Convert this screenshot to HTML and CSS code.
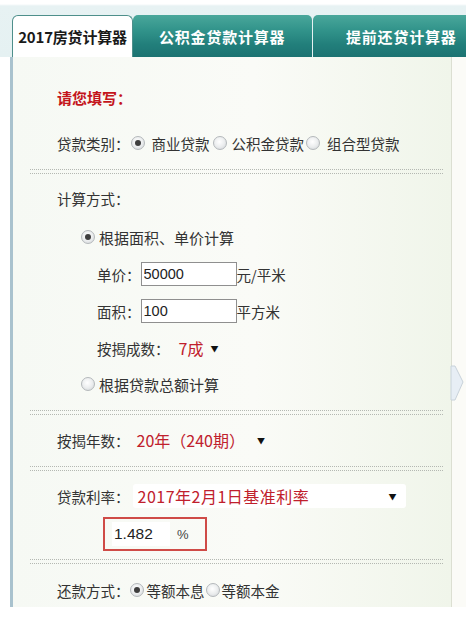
FILE: index.html
```html
<!DOCTYPE html>
<html lang="zh-CN">
<head>
<meta charset="utf-8">
<title>房贷计算器</title>
<link rel="stylesheet" href="styles.css">
</head>
<body>
<div class="page">
  <div class="tabs">
    <div class="tab tab-active">2017房贷计算器</div>
    <div class="tab tab-2">公积金贷款计算器</div>
    <div class="tab tab-3">提前还贷计算器</div>
  </div>
  <div class="wrap">
    <div class="panel">
      <div class="row title">请您填写：</div>
      <div class="row r-type">
        <span class="lbl">贷款类别：</span>
        <span class="radio on r1"></span><span class="opt">商业贷款</span>
        <span class="radio r2"></span><span class="opt">公积金贷款</span>
        <span class="radio r3"></span><span class="opt">组合型贷款</span>
      </div>
      <div class="sep s1"></div>
      <div class="row r-method"><span class="lbl">计算方式：</span></div>
      <div class="row sub-radio r-area"><span class="radio on"></span><span class="opt o-sub">根据面积、单价计算</span></div>
      <div class="row sub r-price"><span class="lbl">单价：</span><input class="txt" value="50000"><span class="unit">元/平米</span></div>
      <div class="row sub r-size"><span class="lbl">面积：</span><input class="txt" value="100"><span class="unit">平方米</span></div>
      <div class="row sub r-ratio"><span class="lbl">按揭成数：</span><span class="sel sel-ratio">7成</span><span class="arrow a-ratio">▼</span></div>
      <div class="row sub-radio r-total"><span class="radio"></span><span class="opt o-sub">根据贷款总额计算</span></div>
      <div class="sep s2"></div>
      <div class="row r-years"><span class="lbl">按揭年数：</span><span class="sel sel-years">20年（240期）</span><span class="arrow a-years">▼</span></div>
      <div class="sep s3"></div>
      <div class="row r-rate"><span class="lbl">贷款利率：</span><span class="sel-box"><span class="sel sel-rate">2017年2月1日基准利率</span><span class="arrow a-rate">▼</span></span></div>
      <div class="ratebox"><span class="rate-in">1.482</span><span class="pct">%</span></div>
      <div class="sep s4"></div>
      <div class="row r-repay">
        <span class="lbl">还款方式：</span>
        <span class="radio on rp1"></span><span class="opt">等额本息</span>
        <span class="radio rp2"></span><span class="opt">等额本金</span>
      </div>
    </div>
    <div class="side">
      <svg class="chev" width="16" height="36" viewBox="0 0 16 36">
        <polygon points="2,1 6,1 14,17 6,35 2,35" fill="#e7eef5" stroke="#c8d2da" stroke-width="1"/>
      </svg>
    </div>
  </div>
</div>
</body>
</html>
```

FILE: styles.css
```css
* { box-sizing: border-box; }
html, body { margin: 0; padding: 0; background: #ffffff; }
body {
  font-family: "Noto Sans CJK SC", "Liberation Sans", sans-serif;
  font-size: 14.5px;
  color: #333;
}
.page { width: 466px; height: 619px; overflow: hidden; }

.tabs {
  display: flex;
  align-items: flex-end;
  height: 57px;
  padding-left: 12px;
  background: linear-gradient(#ffffff 0, #ffffff 4px, #e7f2f3 6px, #e5f1f2 100%);
}
.tab {
  height: 42px;
  display: flex;
  align-items: center;
  font-weight: bold;
  white-space: nowrap;
}
.tab-active {
  width: 121px;
  background: #ffffff;
  border: 1px solid #4e8f8b;
  border-bottom: none;
  border-radius: 6px 6px 0 0;
  justify-content: center;
  color: #1a1a1a;
  font-size: 15px;
  letter-spacing: -0.2px;
}
.tab-2, .tab-3 {
  background: linear-gradient(#4aa79b 0, #32948b 35%, #227f7b 70%, #1c7372 100%);
  color: #ffffff;
  font-size: 15px;
  letter-spacing: 0.8px;
  border-radius: 5px 5px 0 0;
}
.tab-2 { width: 179px; padding-left: 26px; }
.tab-3 { flex: 1; margin-left: 1px; padding-left: 33px; border-radius: 5px 0 0 0; }

.wrap {
  display: flex;
  height: 550px;
  background: #ffffff;
}
.panel {
  width: 442px;
  margin-left: 10px;
  height: 550px;
  border-left: 3px solid #a9c2ce;
  border-right: 1px solid #dcdfd2;
  background: linear-gradient(to right, #f6f9f4 0, #fafbf7 55%, #f0f5ea 100%);
  display: flex;
  flex-direction: column;
}
.side {
  flex: 1;
  position: relative;
  background: #fbfbf7;
}
.chev { position: absolute; left: -3px; top: 308px; }

.row {
  height: 24px;
  display: flex;
  align-items: center;
  padding-left: 44px;
  white-space: nowrap;
}
.title {
  margin-top: 28px;
  color: #c4151c;
  font-weight: bold;
  font-size: 15px;
}
.r-type { margin-top: 22px; }
.s1 { margin-top: 14px; }
.r-method { margin-top: 12px; }
.r-area { margin-top: 15px; }
.r-price, .r-size, .r-ratio { margin-top: 13px; }
.r-total { margin-top: 12px; }
.s2 { margin-top: 14px; }
.r-years { margin-top: 13px; }
.s3 { margin-top: 14px; }
.r-rate { margin-top: 13px; }
.ratebox { margin-top: 9px; }
.s4 { margin-top: 8px; }
.r-repay { margin-top: 14px; }

.sub { padding-left: 84px; }
.sub-radio { padding-left: 68px; }

.sep {
  height: 5px;
  margin-left: 17px;
  width: 413px;
  border-top: 1px dotted #b4b8b2;
  border-bottom: 1px dotted #b4b8b2;
  flex: none;
}

.lbl { color: #333; }
.opt { color: #333; }
.o-sub { margin-left: 4px; font-size: 15px; }

.radio {
  width: 14px;
  height: 14px;
  border-radius: 50%;
  border: 1px solid #b4b8bb;
  background: radial-gradient(circle at 45% 40%, #ffffff 0, #eceeef 50%, #cfd3d6 100%);
  position: relative;
  flex: none;
}
.radio.on::after {
  content: "";
  position: absolute;
  left: 3px;
  top: 3px;
  width: 6px;
  height: 6px;
  border-radius: 50%;
  background: #3e3e3e;
}
.r1 { margin-left: 1px; margin-right: 7px; }
.r2 { margin-left: 3px; margin-right: 5px; }
.r3 { margin-left: 2px; margin-right: 7px; }
.rp1 { margin-left: 0; margin-right: 3px; }
.rp2 { margin-left: 1px; margin-right: 2px; }

.txt {
  width: 96px;
  height: 24px;
  border: 1px solid #8f8f8f;
  background: #ffffff;
  font-family: "Liberation Sans", "Noto Sans CJK SC", sans-serif;
  font-size: 14.5px;
  color: #222;
  padding: 0 2px;
  margin: 0;
  outline: none;
}
.unit { color: #333; }

.sel { color: #c0202c; font-size: 16px; }
.sel-ratio { margin-left: 9px; }
.sel-years { margin-left: 7px; }
.sel-rate { letter-spacing: 0.5px; }
.arrow { font-size: 8px; color: #111; }
.a-ratio { margin-left: 7px; }
.a-years { margin-left: 12px; }
.sel-box {
  display: flex;
  align-items: center;
  margin-left: 3px;
  height: 24px;
  width: 273px;
  padding-left: 5px;
  background: #ffffff;
  border-radius: 3px;
}
.a-rate { margin-left: auto; margin-right: 9px; }

.ratebox {
  margin-left: 90px;
  width: 104px;
  height: 34px;
  border: 2px solid #cf4b47;
  display: flex;
  align-items: center;
  padding-left: 7px;
  font-family: "Liberation Sans", sans-serif;
  flex: none;
}
.rate-in {
  width: 58px;
  height: 24px;
  line-height: 24px;
  padding-left: 2px;
  background: #ffffff;
  font-size: 15.5px;
  color: #222;
}
.pct { margin-left: 7px; font-size: 13px; color: #444; }
```
